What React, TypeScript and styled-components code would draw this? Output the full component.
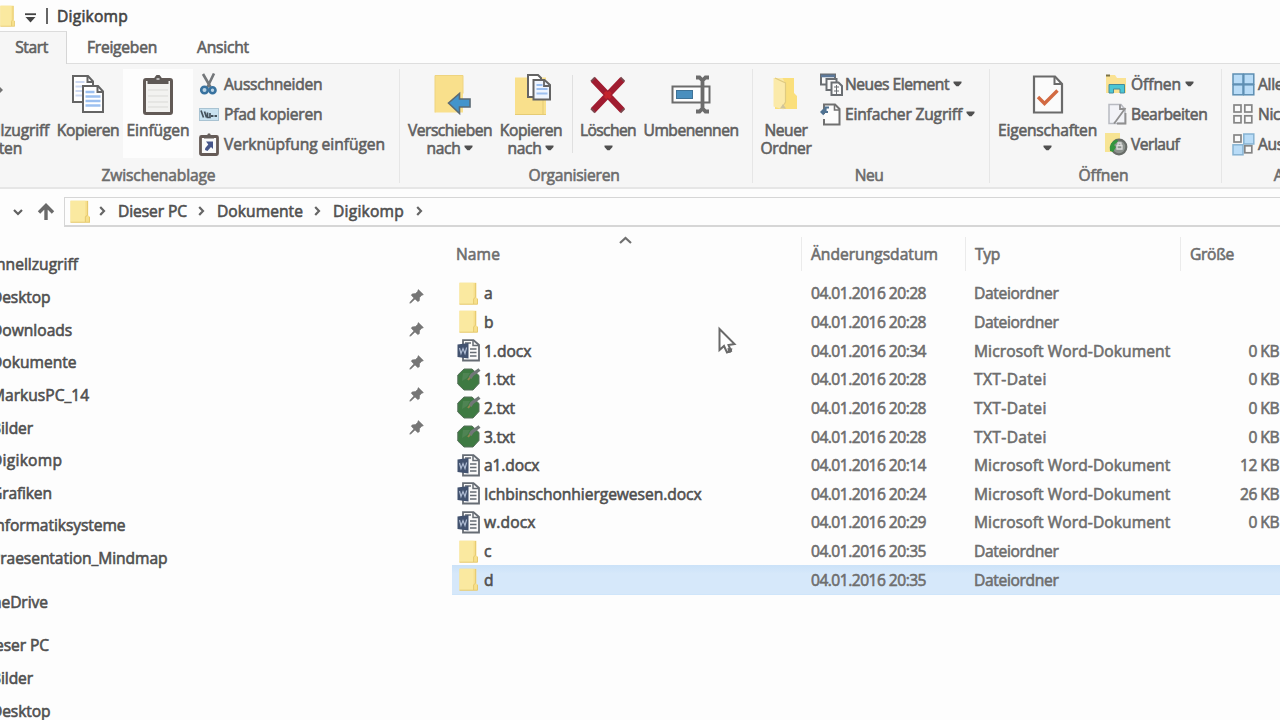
import React from 'react';
import styled, { createGlobalStyle } from 'styled-components';

const Global = createGlobalStyle`
  * { box-sizing: border-box; }
  html, body { margin: 0; padding: 0; overflow: hidden; }
  body { font-family: "Open Sans", "Noto Sans", sans-serif; font-size: 15.6px; }
  svg { display: block; flex: none; }
`;

const Window = styled.div`
  position: relative;
  width: 1280px;
  height: 720px;
  overflow: hidden;
  display: flex;
  flex-direction: column;
  background: #fdfdfd;
  color: #606060;
`;

const Text = styled.span<{ $ls?: number }>`
  white-space: nowrap;
  letter-spacing: ${p => p.$ls ?? 0}px;
  -webkit-text-stroke: 0.6px currentColor;
`;

/* Title bar and tabs */
const TitleBar = styled.header`
  display: flex;
  align-items: center;
  height: 31px;
  flex: none;
  padding-top: 1px;
  color: #444;
`;
const QuickCaret = styled.div`
  margin: 3px 0 0 10px;
`;
const TitleDivider = styled.div`
  width: 2px;
  height: 16px;
  margin: 0 9px 0 10px;
  background: #666;
`;
const Tabs = styled.nav`
  display: flex;
  flex: none;
  height: 33px;
`;
const Tab = styled.div<{ $w: number; $active?: boolean }>`
  width: ${p => p.$w}px;
  display: flex;
  justify-content: center;
  line-height: 31px;
  ${p => p.$active
    ? 'background:#f6f6f6;border-top:1px solid #dcdcdc;border-right:1px solid #d6d6d6;padding-right:3px;'
    : 'border-bottom:1px solid #dedede;padding-top:1px;padding-right:1px;'}
`;
const TabRest = styled.div`
  flex: 1;
  border-bottom: 1px solid #dedede;
`;

/* Ribbon */
const Ribbon = styled.section`
  display: flex;
  flex: none;
  height: 125px;
  margin-left: -83px;
  background: #f6f6f6;
  border-bottom: 2px solid #e6e6e6;
`;
const Group = styled.div<{ $w: number }>`
  position: relative;
  width: ${p => p.$w}px;
  flex: none;
  display: flex;
  flex-direction: column;
  padding-top: 5px;
  &::after {
    content: '';
    position: absolute;
    right: 0;
    top: 5px;
    bottom: 4px;
    width: 1px;
    background: #e6e6e6;
  }
`;
const GroupBody = styled.div`
  display: flex;
  height: 96px;
`;
const GroupTitle = styled.div<{ $pr?: number }>`
  text-align: center;
  line-height: 21px;
  padding-right: ${p => p.$pr ?? 0}px;
  color: #6c6c6c;
`;
const Big = styled.div<{ $w: number; $ml?: number; $hot?: boolean }>`
  width: ${p => p.$w}px;
  margin-left: ${p => p.$ml ?? 0}px;
  flex: none;
  height: 89px;
  display: flex;
  flex-direction: column;
  align-items: center;
  background: ${p => (p.$hot ? '#fdfdfd' : 'transparent')};
`;
const BigIcon = styled.div`
  height: 53px;
  padding-top: 5px;
`;
const BigLine = styled.div`
  display: flex;
  align-items: center;
  gap: 4px;
  height: 17.5px;
  line-height: 17px;
`;
const Column = styled.div<{ $ml: number }>`
  margin-left: ${p => p.$ml}px;
`;
const Small = styled.div<{ $icon: number }>`
  display: grid;
  grid-template-columns: ${p => p.$icon}px max-content auto;
  align-items: center;
  height: 30px;
`;
const CaretSlot = styled.span`
  margin-left: 4px;
`;
const VLine = styled.div`
  width: 1px;
  height: 78px;
  margin-top: 6px;
  background: #e0e0e0;
`;

/* Address bar */
const AddressRow = styled.div`
  display: flex;
  align-items: center;
  flex: none;
  height: 30px;
  margin-top: 8px;
  padding-left: 13px;
  color: #505050;
`;
const AddressBox = styled.div`
  flex: 1;
  display: flex;
  align-items: center;
  height: 30px;
  margin-left: 9px;
  padding: 0 0 1px 5px;
  border: 1px solid #d6d6d6;
  border-bottom-width: 2px;
  border-right: 0;
`;
const CrumbArrow = styled.div`
  width: 7px;
  margin-left: 9px;
`;
const Crumb = styled.div<{ $w: number }>`
  width: ${p => p.$w}px;
  margin-left: 12px;
  line-height: 24px;
`;

/* Panes */
const Panes = styled.main`
  display: flex;
  flex: 1;
  min-height: 0;
`;
const Sidebar = styled.aside`
  width: 452px;
  flex: none;
  padding-top: 21px;
  color: #505050;
`;
const NavItem = styled.div<{ $x: number; $gap?: number }>`
  display: flex;
  align-items: center;
  justify-content: space-between;
  height: 32.65px;
  margin-left: ${p => p.$x}px;
  margin-top: ${p => p.$gap ?? 0}px;
  padding-right: 28px;
`;
const Files = styled.section`
  flex: 1;
  min-width: 0;
`;
const HeadRow = styled.div`
  position: relative;
  display: grid;
  grid-template-columns: 350px 164px 215px 1fr;
  height: 42px;
  margin-top: 10px;
  color: #6e6e6e;
`;
const HeadCell = styled.div<{ $pl: number; $line?: boolean }>`
  padding-left: ${p => p.$pl}px;
  height: 34px;
  line-height: 35px;
  border-right: ${p => (p.$line ? '1px solid #ebebeb' : '0')};
`;
const SortMark = styled.div`
  position: absolute;
  left: 167px;
  top: -1px;
`;
const FileRow = styled.div<{ $selected?: boolean }>`
  display: grid;
  grid-template-columns: 32px 327px 163px 1fr;
  align-items: center;
  height: 28.65px;
  color: #6e6e6e;
  background: ${p => (p.$selected ? 'linear-gradient(#cbe2f8, #d6e8fa 30%)' : 'transparent')};
  box-shadow: ${p => (p.$selected ? '0 1px 0 #cfe5fa' : 'none')};
`;
const FileIcon = styled.div<{ $folder: boolean }>`
  padding-left: ${p => (p.$folder ? 7 : 5)}px;
`;
const FileName = styled.div`
  color: #505050;
`;
const TypeSize = styled.div`
  display: flex;
  justify-content: space-between;
  padding-right: 1px;
`;
const Pointer = styled.div`
  position: absolute;
  left: 717px;
  top: 326px;
`;

/* Icons */
const Caret = () => (
  <svg width="9" height="6" viewBox="0 0 9 6"><path d="M.5.5h8v1.600L5.600 5.300H3.400L.5 2.100z" fill="#505050" /></svg>
);
const Chevron = () => (
  <svg width="7" height="10" viewBox="0 0 7 10"><path d="M1.200 1 5 5 1.200 9" fill="none" stroke="#666" strokeWidth="2.200" /></svg>
);
const Folder = ({ w = 19, h = 23 }: { w?: number; h?: number }) => (
  <svg width={w} height={h} viewBox="0 0 19 23" preserveAspectRatio="none">
    <path d="M.5.8h16.800v14.400l1.200 1.500v5.500H.5z" fill="#f7e08c" />
    <path d="M.5.8h14v21.400H.5z" fill="#fae9a0" />
    <path d="M16.600 1v14l-2 2v5M.5 22.200h18v-5.500" fill="none" stroke="#e6ca70" strokeWidth="1" />
  </svg>
);
const Doc = ({ x, y, blue }: { x: number; y: number; blue?: boolean }) => (
  <g transform={`translate(${x} ${y})`}>
    <path d="M1 1h15l5 5.500V27H1z" fill="#fff" stroke="#646464" strokeWidth="2" />
    <path d="M15.500 1v6H21" fill="none" stroke="#646464" strokeWidth="2" />
    {[7, 11.5, 16, 20.5].map(v => (
      <path key={v} d={`M3.500 ${v}h${v < 8 ? 9 : 15}`} stroke={blue ? '#9cc0f0' : '#cdd9f2'} strokeWidth={blue ? 2.5 : 2} />
    ))}
  </g>
);
const CopyIcon = () => (
  <svg width="35" height="40" viewBox="0 0 35 40"><Doc x={1} y={1} /><Doc x={11} y={11} blue /></svg>
);
const PasteIcon = () => (
  <svg width="30" height="42" viewBox="0 0 30 42">
    <rect x="1.500" y="5.500" width="27" height="34" rx="1.500" fill="#f2f2f0" stroke="#625a56" strokeWidth="3" />
    <path d="M5 16h20M5 22h20M5 28h20M5 33h20" stroke="#d9d9d6" />
    <path d="M4.500 10V5.500h7V3.500L13.500 1h3l2 2.500v2h7V10z" fill="#5e5956" />
    <path d="M13.500 5h3" stroke="#ddd" strokeWidth="1.500" />
  </svg>
);
const CutIcon = () => (
  <svg width="20" height="22" viewBox="0 0 20 22">
    <path d="M4 1l7.500 13M15 .5 8 15" stroke="#74777a" strokeWidth="2.600" fill="none" />
    <circle cx="5.500" cy="17" r="3.300" fill="#b9d3e5" stroke="#38729f" strokeWidth="2.600" />
    <circle cx="13.500" cy="17.200" r="3" fill="#b9d3e5" stroke="#38729f" strokeWidth="2.600" />
  </svg>
);
const PathIcon = () => (
  <svg width="20" height="13" viewBox="0 0 20 13">
    <rect x=".5" y=".5" width="19" height="12" fill="#c9e2f0" stroke="#a9c3d2" />
    <path d="M2 2.500 4.500 9.500M5.500 3.500l2 6M8.500 4.500v5h2.500V5" stroke="#45525c" strokeWidth="1.700" fill="none" />
    <path d="M12 8h2.500M15.500 8H18" stroke="#45525c" strokeWidth="2" />
  </svg>
);
const PasteLinkIcon = () => (
  <svg width="20" height="23" viewBox="0 0 20 23">
    <rect x="1.500" y="3.500" width="17" height="18" rx="1" fill="#fafafa" stroke="#655a56" strokeWidth="2.800" />
    <path d="M5 5.500V2.500h3L9 .5h2l1 2h3v3z" fill="#655d5a" />
    <path d="M7 8.500h7v7.500l-2-2L8.500 18 6 17l.3-2 3-3.600z" fill="#46568a" />
  </svg>
);
const MoveIcon = () => (
  <svg width="44" height="42" viewBox="-6 0 44 42">
    <path d="M1 1.500h28v37H1z" fill="#f9e08c" /><path d="M1 38.500v-37h28v18" fill="none" stroke="#eed480" />
    <path d="M14.500 29 25.500 19.500v5.500H36v8H25.500v6.500z" fill="#4394cc" stroke="#5b6a74" strokeWidth="1.600" />
  </svg>
);
const CopyToIcon = () => (
  <svg width="42" height="44" viewBox="-4 -2 42 44">
    <path d="M1 1.500h31v37H1z" fill="#f9e08c" /><path d="M29 18v20.500M1 38.500h31" stroke="#e5cb74" fill="none" />
    <path d="M14-1h10l3 3v19H14z" fill="#fff" stroke="#646464" strokeWidth="2" />
    <path d="M19.500 4h11l5.500 5v14.500H19.500z" fill="#eef5ff" stroke="#646464" strokeWidth="2" />
    <path d="M30 4v6h6" fill="none" stroke="#646464" strokeWidth="1.800" />
    <path d="M22.500 9h6M22.500 13h11M22.500 17.500h11" stroke="#9cc0f0" strokeWidth="2" />
  </svg>
);
const DeleteIcon = () => (
  <svg width="38" height="42" viewBox="0 0 38 42">
    <path d="M4 5.500 33.500 36.500M33.500 5.500 4 36.500" stroke="#a01c30" strokeWidth="6.200" />
    <path d="M2 7.500 6 3.500M31.500 3.500 35.500 7.500M2 34.500l4 4M31.500 38.500l4-4" stroke="#7a484e" strokeWidth="1.800" />
    <path d="M16 18l5.500 6M21.500 18l-5.500 6" stroke="#c4232c" strokeWidth="3.500" />
  </svg>
);
const RenameIcon = () => (
  <svg width="40" height="42" viewBox="0 0 40 42">
    <rect x="1.500" y="12.500" width="37" height="16" fill="#fdfdfd" stroke="#6c6c6c" strokeWidth="2" />
    <rect x="5.500" y="16.500" width="16" height="8" fill="#4a8fbe" stroke="#3f7296" />
    <path d="M25 3.500h3.500l3 3 3-3H38M31.500 6v29M25 37.500h3.500l3-3 3 3H38" fill="none" stroke="#6c6c6c" strokeWidth="3.800" />
  </svg>
);
const NewFolderIcon = () => (
  <svg width="32" height="42" viewBox="1 -1 32 42" transform="translate(0 0)">
    <path d="M6 3h19v15l3 3v13H6z" fill="#fadf7c" />
    <path d="M4.500 3h9l3 6v17l-2 8.500-10-3z" fill="#fbeaaa" />
    <path d="M6 3l10.500 5v19l-3 5" fill="none" stroke="#e0cb80" strokeWidth="1.200" />
    <path d="M14 29l3 4.500h-6z" fill="#cfc49e" />
  </svg>
);
const NewItemIcon = () => (
  <svg width="23" height="23" viewBox="0 0 23 23" fill="#fafafa" stroke="#6a6e72" strokeWidth="2">
    <path d="M1 1.500h14v10H1z" /><path d="M1 3h14" stroke="#5c7899" strokeWidth="2.600" />
    <path d="M6.500 6h10v11h-10z" /><path d="M11.500 9.500h7l3.500 3.500v9H11.500z" />
    <path d="M14 14h5M14 18h5M16.500 12v9" strokeWidth="1" />
  </svg>
);
const EasyAccessIcon = () => (
  <svg width="22" height="23" viewBox="0 0 22 23">
    <path d="M4 11V1.500h11l4.500 4.500v15.500H4V16" fill="#fcfcfc" stroke="#707070" strokeWidth="2" />
    <path d="M14.500 1.500V7H20" fill="none" stroke="#707070" strokeWidth="1.600" />
    <path d="M9 4.500H5.500V8M1 9h7M4 6.500 1.500 9l2.500 2.500" fill="none" stroke="#4f7292" strokeWidth="2.200" />
  </svg>
);
const PropsIcon = () => (
  <svg width="32" height="42" viewBox="0 0 32 42">
    <path d="M2 2.500h21l7 7.500v28.500H2z" fill="#fbfbfb" stroke="#6a6a6a" strokeWidth="2.200" />
    <path d="M22.500 2.500V10H30" fill="none" stroke="#6a6a6a" strokeWidth="2" />
    <path d="M6 23l6.500 6.500L25.500 16.500" fill="none" stroke="#d26a42" strokeWidth="3.400" />
  </svg>
);
const OpenIcon = () => (
  <svg width="23" height="22" viewBox="0 0 23 22">
    <path d="M1 2h9l2 3h9v15H1z" fill="#fae293" /><path d="M1 2.500h4" stroke="#7c7246" strokeWidth="2" />
    <path d="M4 20v-8.500h15.500V20H15v-4H8.500v4z" fill="#4bc6d4" stroke="#458a9b" />
  </svg>
);
const EditIcon = () => (
  <svg width="23" height="22" viewBox="0 0 23 22">
    <path d="M4 1.500h12l4 5v14H4z" fill="#f2f3f7" stroke="#b8bac1" strokeWidth="1.500" />
    <path d="M20.500 5 11 18l-2 2.500M15 1.500V6h4M12 20.500h8.500V10" fill="none" stroke="#909090" strokeWidth="1.800" />
  </svg>
);
const HistoryIcon = () => (
  <svg width="23" height="24" viewBox="0 0 23 24">
    <path d="M0 1h15v19H0z" fill="#f7e494" />
    <circle cx="14" cy="15" r="7.300" fill="#8d938e" stroke="#686c68" strokeWidth="2.200" />
    <path d="M5 19a9 9 0 0 1 7-11.500l1 2-4 3.500 2 2-3 5z" fill="#35963f" />
    <path d="M12 17v-3.500h5V17zM13 13v-2h3v2" stroke="#dedede" strokeWidth="1.300" fill="none" />
  </svg>
);
const SelectIcon = ({ fill, joined }: { fill: boolean[]; joined?: boolean }) => (
  <svg width="23" height="23" viewBox="0 0 23 23">
    {fill.map((on, i) => {
      const s = on ? 10 : 7;
      const o = on ? 1 : 2;
      return (
        <rect key={i} x={o + (i % 2) * 10.8} y={o + Math.floor(i / 2) * 10.8} width={s} height={s}
          fill={on ? '#b9dcf7' : '#fafafa'} stroke={on ? (joined ? '#5d8eb2' : '#86b2d2') : '#858585'} strokeWidth={on ? 1.5 : 1.7} />
      );
    })}
  </svg>
);
const Pin = () => (
  <svg width="15" height="15" viewBox="0 0 15 15">
    <path d="M9.300.6 14.400 5.600 12.500 6.400 10.600 8.500 10.300 11.800 8.800 12.600 6 9.900 2 13.800.8 14.200 1.200 12.900 4.900 9 2.300 6.200 3.200 4.900 6.500 4.500 8.600 2.500z" fill="#767676" stroke="#767676" strokeWidth=".6" />
  </svg>
);
const Word = () => (
  <svg width="24" height="23" viewBox="0 0 24 23">
    <path d="M6 6V1.200h10.500L22 6v15.500H6V18" fill="#fafafa" stroke="#666c74" strokeWidth="1.800" />
    <path d="M16 1.500V6.500h5.500M8 4h6" fill="none" stroke="#666c74" strokeWidth="1.500" />
    <path d="M13 10h6.500M13 13.500h6.500M13 17h6.500" stroke="#666c74" strokeWidth="1.600" />
    <path d="M.5 5.500 11.500 4v15.500L.5 18z" fill="#42526f" />
    <path d="M2.500 9l1.500 5.500 2-5 2 5 1.600-6" fill="none" stroke="#aebbd2" strokeWidth="1.200" />
  </svg>
);
const TextDoc = () => (
  <svg width="24" height="23" viewBox="0 0 24 23">
    <path d="M7 1h8l7 6.500v8L16 22H7L.8 16V7z" fill="#3e7a42" stroke="#56705a" strokeWidth="1" />
    <path d="M6 5h7l-3 5-5 3z" fill="#4f8453" />
    <path d="M22.500 1.500 15 7l-2 3" stroke="#717777" strokeWidth="3.400" fill="none" />
    <path d="M11 12l2-2.500" stroke="#8f8650" strokeWidth="2" />
  </svg>
);

type Label = [string, number];

const BigButton = ({ w, ml, hot, icon, lines, caret }: {
  w: number; ml?: number; hot?: boolean; icon: React.ReactNode; lines: Label[]; caret?: 'inline' | 'below';
}) => (
  <Big $w={w} $ml={ml} $hot={hot}>
    <BigIcon>{icon}</BigIcon>
    {lines.map(([t, ls], i) => (
      <BigLine key={t}>
        <Text $ls={ls}>{t}</Text>
        {caret === 'inline' && i === lines.length - 1 && <Caret />}
      </BigLine>
    ))}
    {caret === 'below' && <BigLine><Caret /></BigLine>}
  </Big>
);

const SmallButton = ({ icon, iw, label, caret }: { icon: React.ReactNode; iw: number; label: Label; caret?: boolean }) => (
  <Small $icon={iw}>
    {icon}
    <Text $ls={label[1]}>{label[0]}</Text>
    {caret && <CaretSlot><Caret /></CaretSlot>}
  </Small>
);

const nav: { t: string; ls: number; x: number; pin?: boolean; gap?: number }[] = [
  { t: 'Schnellzugriff', ls: 0, x: -20 },
  { t: 'Desktop', ls: -0.1, x: -9, pin: true },
  { t: 'Downloads', ls: 0, x: -9, pin: true },
  { t: 'Dokumente', ls: 0, x: -9, pin: true },
  { t: 'MarkusPC_14', ls: 0, x: -9, pin: true },
  { t: 'Bilder', ls: -0.1, x: -9, pin: true },
  { t: 'Digikomp', ls: 0.25, x: -9 },
  { t: 'Grafiken', ls: -0.15, x: -9 },
  { t: 'Informatiksysteme', ls: -0.08, x: -9 },
  { t: 'Praesentation_Mindmap', ls: -0.08, x: -9 },
  { t: 'OneDrive', ls: -0.1, x: -20, gap: 11 },
  { t: 'Dieser PC', ls: -0.09, x: -20, gap: 11 },
  { t: 'Bilder', ls: -0.1, x: -9 },
  { t: 'Desktop', ls: -0.1, x: -9 },
];

const crumbs: { t: string; ls: number; w: number }[] = [
  { t: 'Dieser PC', ls: -0.09, w: 71 },
  { t: 'Dokumente', ls: 0.05, w: 88 },
  { t: 'Digikomp', ls: 0.22, w: 74 },
];

type Kind = 'folder' | 'word' | 'txt';
const kinds: Record<Kind, { icon: React.ReactNode; label: Label }> = {
  folder: { icon: <Folder w={19} h={23} />, label: ['Dateiordner', -0.34] },
  word: { icon: <Word />, label: ['Microsoft Word-Dokument', 0.09] },
  txt: { icon: <TextDoc />, label: ['TXT-Datei', 0.36] },
};
const files: { name: string; ls: number; time: string; kind: Kind; size?: string; selected?: boolean }[] = [
  { name: 'a', ls: 0, time: '20:28', kind: 'folder' },
  { name: 'b', ls: 0, time: '20:28', kind: 'folder' },
  { name: '1.docx', ls: -0.05, time: '20:34', kind: 'word', size: '0 KB' },
  { name: '1.txt', ls: -0.3, time: '20:28', kind: 'txt', size: '0 KB' },
  { name: '2.txt', ls: -0.3, time: '20:28', kind: 'txt', size: '0 KB' },
  { name: '3.txt', ls: -0.3, time: '20:28', kind: 'txt', size: '0 KB' },
  { name: 'a1.docx', ls: -0.13, time: '20:14', kind: 'word', size: '12 KB' },
  { name: 'Ichbinschonhiergewesen.docx', ls: -0.05, time: '20:24', kind: 'word', size: '26 KB' },
  { name: 'w.docx', ls: 0.15, time: '20:29', kind: 'word', size: '0 KB' },
  { name: 'c', ls: 0, time: '20:35', kind: 'folder' },
  { name: 'd', ls: 0, time: '20:35', kind: 'folder', selected: true },
];

export default function App() {
  return (
    <Window>
      <Global />
      <TitleBar>
        <Folder w={15} h={22} />
        <QuickCaret>
          <svg width="11" height="10" viewBox="0 0 11 10">
            <path d="M0 1.200h11" stroke="#444" strokeWidth="1.800" /><path d="M.5 4h10L5.500 9.500z" fill="#444" />
          </svg>
        </QuickCaret>
        <TitleDivider />
        <Text $ls={0.22}>Digikomp</Text>
      </TitleBar>
      <Tabs>
        <Tab $w={67} $active><Text $ls={-0.4}>Start</Text></Tab>
        <Tab $w={111}><Text $ls={-0.24}>Freigeben</Text></Tab>
        <Tab $w={91}><Text $ls={-0.2}>Ansicht</Text></Tab>
        <TabRest />
      </Tabs>

      <Ribbon>
        <Group $w={483}>
          <GroupBody>
            <BigButton w={120} ml={13} icon={
              <svg width="26" height="42" viewBox="0 0 26 42"><path d="M14 11h7l5 5-5 5h-7z" fill="#747474" /></svg>
            } lines={[['An Schnellzugriff', -0.2], ['anheften', -0.2]]} />
            <BigButton w={74} ml={1} icon={<CopyIcon />} lines={[['Kopieren', -0.45]]} />
            <BigButton w={70} ml={-2} hot icon={<PasteIcon />} lines={[['Einfügen', -0.1]]} />
            <Column $ml={6}>
              <SmallButton iw={25} icon={<CutIcon />} label={['Ausschneiden', -0.27]} />
              <SmallButton iw={25} icon={<PathIcon />} label={['Pfad kopieren', -0.24]} />
              <SmallButton iw={25} icon={<PasteLinkIcon />} label={['Verknüpfung einfügen', -0.05]} />
            </Column>
          </GroupBody>
          <GroupTitle><Text $ls={-0.13}>Zwischenablage</Text></GroupTitle>
        </Group>

        <Group $w={353}>
          <GroupBody>
            <BigButton w={92} ml={4} icon={<MoveIcon />} lines={[['Verschieben', -0.49], ['nach', -0.32]]} caret="inline" />
            <BigButton w={70} icon={<CopyToIcon />} lines={[['Kopieren', -0.45], ['nach', -0.32]]} caret="inline" />
            <Column $ml={6}><VLine /></Column>
            <BigButton w={64} ml={3} icon={<DeleteIcon />} lines={[['Löschen', -0.61]]} caret="below" />
            <BigButton w={100} ml={1} icon={<RenameIcon />} lines={[['Umbenennen', -0.49]]} />
          </GroupBody>
          <GroupTitle $pr={5}><Text $ls={-0.25}>Organisieren</Text></GroupTitle>
        </Group>

        <Group $w={237}>
          <GroupBody>
            <BigButton w={60} ml={3} icon={<NewFolderIcon />} lines={[['Neuer', -0.44], ['Ordner', -0.29]]} />
            <Column $ml={4}>
              <SmallButton iw={25} icon={<NewItemIcon />} label={['Neues Element', -0.46]} caret />
              <SmallButton iw={25} icon={<EasyAccessIcon />} label={['Einfacher Zugriff', -0.18]} caret />
            </Column>
          </GroupBody>
          <GroupTitle $pr={5}><Text $ls={-0.5}>Neu</Text></GroupTitle>
        </Group>

        <Group $w={232}>
          <GroupBody>
            <BigButton w={105} ml={5} icon={<PropsIcon />} lines={[['Eigenschaften', -0.2]]} caret="below" />
            <Column $ml={5}>
              <SmallButton iw={26} icon={<OpenIcon />} label={['Öffnen', -0.08]} caret />
              <SmallButton iw={26} icon={<EditIcon />} label={['Bearbeiten', -0.36]} />
              <SmallButton iw={26} icon={<HistoryIcon />} label={['Verlauf', -0.5]} />
            </Column>
          </GroupBody>
          <GroupTitle $pr={5}><Text $ls={-0.08}>Öffnen</Text></GroupTitle>
        </Group>

        <Group $w={180}>
          <GroupBody>
            <Column $ml={10}>
              <SmallButton iw={26} icon={<SelectIcon fill={[true, true, true, true]} joined />} label={['Alles auswählen', -0.3]} />
              <SmallButton iw={26} icon={<SelectIcon fill={[false, false, false, false]} />} label={['Nichts auswählen', -0.3]} />
              <SmallButton iw={26} icon={<SelectIcon fill={[false, true, true, false]} />} label={['Auswahl umkehren', -0.3]} />
            </Column>
          </GroupBody>
          <GroupTitle><Text $ls={-0.3}>Auswählen</Text></GroupTitle>
        </Group>
      </Ribbon>

      <AddressRow>
        <svg width="10" height="8" viewBox="0 0 10 8"><path d="M1 2l4 4 4-4" fill="none" stroke="#606060" strokeWidth="2.200" /></svg>
        <svg width="32" height="18" viewBox="0 0 32 18"><path d="M23 17V3M16 9.500l7-7 7 7" fill="none" stroke="#6a6a6a" strokeWidth="3.400" /></svg>
        <AddressBox>
          <Folder w={20} h={23} />
          <CrumbArrow><Chevron /></CrumbArrow>
          {crumbs.map(c => (
            <React.Fragment key={c.t}>
              <Crumb $w={c.w}><Text $ls={c.ls}>{c.t}</Text></Crumb>
              <CrumbArrow><Chevron /></CrumbArrow>
            </React.Fragment>
          ))}
        </AddressBox>
      </AddressRow>

      <Panes>
        <Sidebar>
          {nav.map((n, i) => (
            <NavItem key={i} $x={n.x} $gap={n.gap}>
              <Text $ls={n.ls}>{n.t}</Text>
              {n.pin && <Pin />}
            </NavItem>
          ))}
        </Sidebar>
        <Files>
          <HeadRow>
            <HeadCell $pl={4} $line><Text $ls={0.1}>Name</Text></HeadCell>
            <HeadCell $pl={9} $line><Text>Änderungsdatum</Text></HeadCell>
            <HeadCell $pl={9} $line><Text $ls={-0.31}>Typ</Text></HeadCell>
            <HeadCell $pl={9}><Text $ls={-0.31}>Größe</Text></HeadCell>
            <SortMark>
              <svg width="13" height="8" viewBox="0 0 13 8"><path d="M1 7l5.500-5L12 7" fill="none" stroke="#707070" strokeWidth="2.200" /></svg>
            </SortMark>
          </HeadRow>
          {files.map(f => (
            <FileRow key={f.name} $selected={f.selected}>
              <FileIcon $folder={f.kind === 'folder'}>{kinds[f.kind].icon}</FileIcon>
              <FileName><Text $ls={f.ls}>{f.name}</Text></FileName>
              <Text $ls={-0.52}>04.01.2016 {f.time}</Text>
              <TypeSize>
                <Text $ls={kinds[f.kind].label[1]}>{kinds[f.kind].label[0]}</Text>
                {f.size && <Text $ls={-0.5}>{f.size}</Text>}
              </TypeSize>
            </FileRow>
          ))}
        </Files>
      </Panes>

      <Pointer>
        <svg width="20" height="30" viewBox="0 0 20 30">
          <path d="M2.500 3v21l4.500-4 3 6.500 4-1.500-2.500-6 6-1z" fill="#fff" stroke="#6a6a6a" strokeWidth="2" />
          <path d="M10.500 22l5 .5-1.500 4-3 .5z" fill="#6a6a6a" />
        </svg>
      </Pointer>
    </Window>
  );
}
